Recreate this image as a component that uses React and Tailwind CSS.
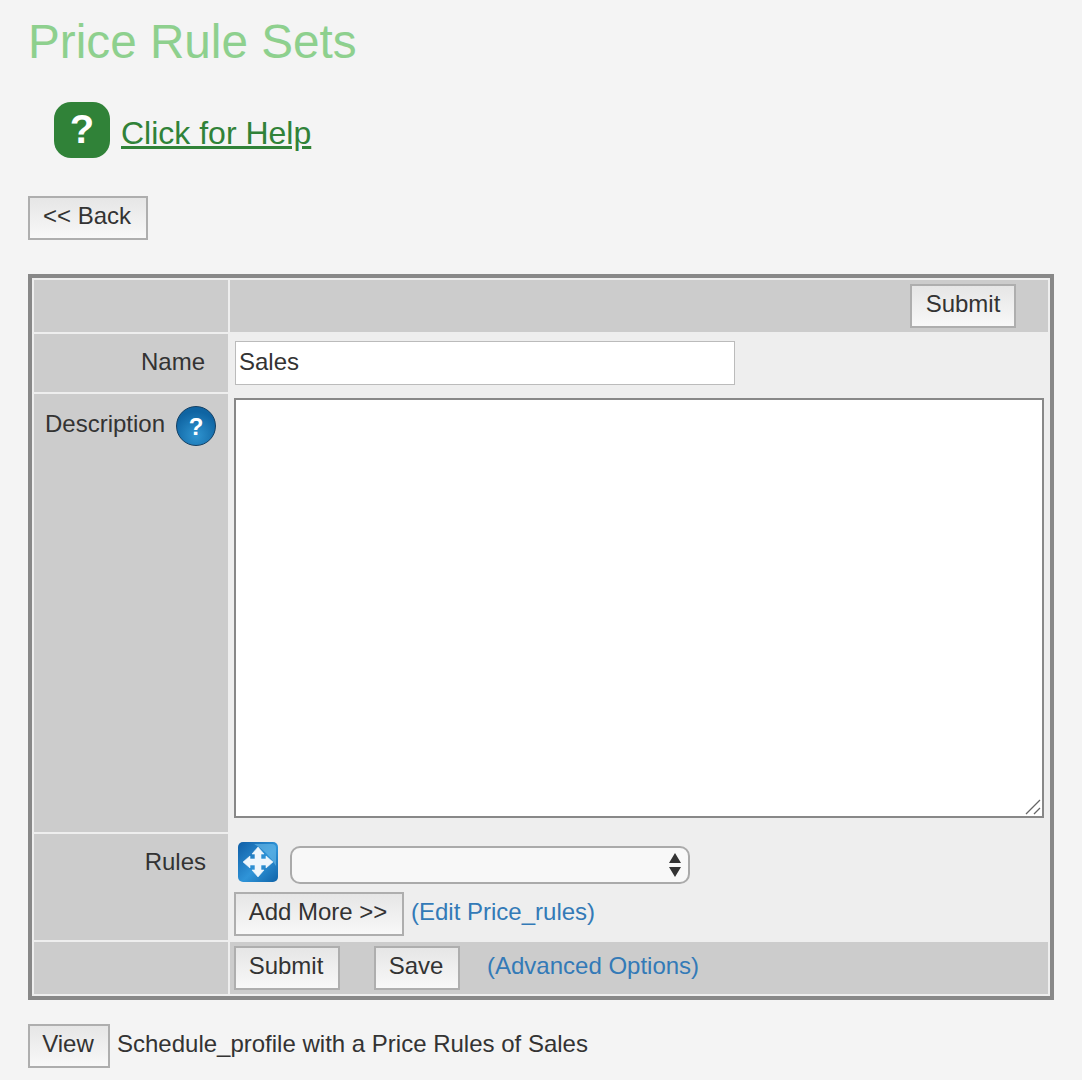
const btn = "h-[44px] border-2 border-[#aeaeae] bg-gradient-to-b from-[#e6e6e6] to-[#f8f8f8] text-[24px] leading-none text-[#333] pb-[5px] pr-[2px]";
const link = "text-[24px] text-[#337ab7]";

function MoveIcon() {
  return (
    <svg width="40" height="40" viewBox="0 0 40 40" className="block shrink-0">
      <defs>
        <linearGradient id="moveBg" x1="0" y1="0" x2="1" y2="1">
          <stop offset="0" stopColor="#0f5ea6" />
          <stop offset="0.55" stopColor="#2f94d8" />
          <stop offset="1" stopColor="#0f63a8" />
        </linearGradient>
      </defs>
      <rect width="40" height="40" rx="5" fill="url(#moveBg)" />
      <path d="M16 2h18a4 4 0 0 1 4 4v18c-6-10-12-16-22-22z" fill="#6dbcea" opacity="0.6" />
      <path
        d="M20 5L26 12H23V17H28V14L35 20L28 26V23H23V28H26L20 35L14 28H17V23H12V26L5 20L12 14V17H17V12H14Z"
        fill="#eef6fc"
        stroke="#eef6fc"
        strokeWidth="0.6"
        strokeLinejoin="round"
      />
    </svg>
  );
}

function HelpDot() {
  return (
    <span className="w-[40px] h-[40px] rounded-full flex items-center justify-center shrink-0 border border-[#123f63] bg-[radial-gradient(circle_at_50%_75%,#2f94d0,#0f64a2_70%)] text-white font-bold text-[24px] leading-none pt-[2px]">
      ?
    </span>
  );
}

export default function App() {
  return (
    <div className="min-h-[1080px] bg-[#f4f4f4] font-['Liberation_Sans',Arial,sans-serif] text-[#333] pl-[28px] pr-[28px] overflow-hidden">
      <h1 className="pt-[15px] text-[47.7px] leading-[54px] font-normal text-[#8ed08e]">Price Rule Sets</h1>

      <div className="flex items-center mt-[33px] ml-[26px] gap-[11px]">
        <span className="w-[56px] h-[56px] rounded-[17px] bg-[#308238] flex items-center justify-center text-white font-bold text-[40px] leading-none pb-[3px]">?</span>
        <a className="text-[32px] leading-none text-[#308238] underline mt-[6px]">Click for Help</a>
      </div>

      <button className={`${btn} w-[120px] block mt-[38px]`}>&lt;&lt; Back</button>

      <div className="mt-[34px] border-[4px] border-[#888] bg-[#eee] p-[2px] grid grid-cols-[194px_818px] grid-rows-[52px_58px_438px_106px_52px] gap-[2px]">
        <div className="bg-[#ccc]" />
        <div className="bg-[#ccc] flex justify-end items-start pt-[4px] pr-[32px]">
          <button className="h-[44px] w-[106px] border-2 border-[#aeaeae] bg-gradient-to-b from-[#e6e6e6] to-[#f8f8f8] text-[24px] leading-none text-[#333] pb-[5px]">Submit</button>
        </div>

        <div className="bg-[#ccc] flex items-center justify-end pr-[23px] pb-[2px] text-[24px]">Name</div>
        <div className="flex items-start pt-[7px] pl-[5px]">
          <input
            defaultValue="Sales"
            className="w-[500px] h-[44px] bg-white border border-[#bbb] pl-[3px] pr-[4px] pb-[2px] text-[24px] text-[#333] outline-none"
          />
        </div>

        <div className="bg-[#ccc] flex items-start pt-[12px] pl-[11px] gap-[11px] text-[24px]">
          <span>Description</span>
          <HelpDot />
        </div>
        <div className="pt-[4px] pl-[4px]">
          <div className="relative w-[810px] h-[420px]">
            <textarea className="block w-full h-full resize-none bg-white border-2 border-[#888] outline-none" />
            <svg width="16" height="16" viewBox="0 0 16 16" className="absolute right-[3px] bottom-[3px]">
              <path d="M1 15L15 1M9 15L15 9" stroke="#666" strokeWidth="1.3" fill="none" />
            </svg>
          </div>
        </div>

        <div className="bg-[#ccc] flex justify-end pr-[22px] pt-[10px] text-[24px]">Rules</div>
        <div className="pl-[4px]">
          <div className="flex items-start pl-[4px] pt-[8px] gap-[12px]">
            <MoveIcon />
            <div className="relative w-[400px] h-[38px] mt-[4px]">
              <select className="appearance-none block w-full h-full rounded-[10px] border-2 border-[#aaa] bg-[#f8f8f8] outline-none" />
              <svg width="14" height="26" viewBox="0 0 14 26" className="absolute right-[8px] top-[6px]">
                <path d="M7 1l6 10H1zM7 25l-6-10h12z" fill="#333" />
              </svg>
            </div>
          </div>
          <div className="flex items-center mt-[8px] gap-[7px]">
            <button className={`${btn} w-[170px]`}>Add More &gt;&gt;</button>
            <a className={`${link} mb-[4px]`}>(Edit Price_rules)</a>
          </div>
        </div>

        <div className="bg-[#ccc]" />
        <div className="bg-[#ccc] flex items-start pt-[4px] pl-[4px]">
          <button className={`${btn} w-[106px]`}>Submit</button>
          <button className={`${btn} w-[86px] ml-[34px]`}>Save</button>
          <a className={`${link} ml-[27px] mt-[2px]`}>(Advanced Options)</a>
        </div>
      </div>

      <div className="flex items-center mt-[24px] gap-[7px] text-[24px]">
        <button className={`${btn} w-[82px]`}>View</button>
        <span className="pb-[4px]">Schedule_profile with a Price Rules of Sales</span>
      </div>
    </div>
  );
}
